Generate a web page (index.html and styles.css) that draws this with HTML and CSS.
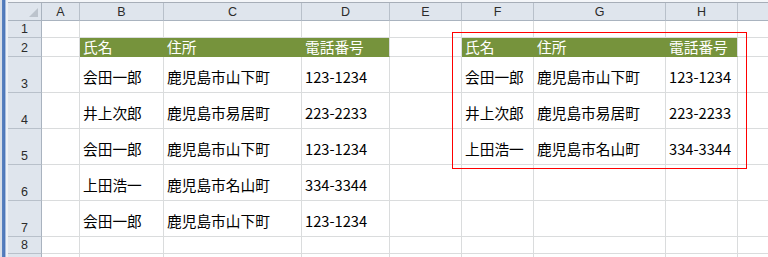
FILE: index.html
```html
<!DOCTYPE html>
<html lang="ja">
<head>
<meta charset="utf-8">
<title>Sheet</title>
<link rel="stylesheet" href="styles.css">
</head>
<body>
<div class="app">
  <div class="strip"></div>
  <div class="work">
    <div class="topbar"></div>
    <div class="sheet">
      <div class="corner"><span class="tri"></span></div>
      <div class="ch">A</div><div class="ch">B</div><div class="ch">C</div><div class="ch">D</div><div class="ch">E</div><div class="ch">F</div><div class="ch">G</div><div class="ch">H</div><div class="ch"></div>

      <div class="rh">1</div>
      <div class="c"></div><div class="c"></div><div class="c"></div><div class="c"></div><div class="c"></div><div class="c"></div><div class="c"></div><div class="c"></div><div class="c"></div>

      <div class="rh">2</div>
      <div class="c"></div>
      <div class="c hd join">氏名</div><div class="c hd join">住所</div><div class="c hd">電話番号</div>
      <div class="c"></div>
      <div class="c hd join">氏名</div><div class="c hd join">住所</div><div class="c hd">電話番号</div>
      <div class="c"></div>

      <div class="rh">3</div>
      <div class="c"></div><div class="c t">会田一郎</div><div class="c t">鹿児島市山下町</div><div class="c t">123-1234</div>
      <div class="c"></div><div class="c t">会田一郎</div><div class="c t">鹿児島市山下町</div><div class="c t">123-1234</div><div class="c"></div>

      <div class="rh">4</div>
      <div class="c"></div><div class="c t">井上次郎</div><div class="c t">鹿児島市易居町</div><div class="c t">223-2233</div>
      <div class="c"></div><div class="c t">井上次郎</div><div class="c t">鹿児島市易居町</div><div class="c t">223-2233</div><div class="c"></div>

      <div class="rh">5</div>
      <div class="c"></div><div class="c t">会田一郎</div><div class="c t">鹿児島市山下町</div><div class="c t">123-1234</div>
      <div class="c"></div><div class="c t">上田浩一</div><div class="c t">鹿児島市名山町</div><div class="c t">334-3344</div><div class="c"></div>

      <div class="rh">6</div>
      <div class="c"></div><div class="c t">上田浩一</div><div class="c t">鹿児島市名山町</div><div class="c t">334-3344</div>
      <div class="c"></div><div class="c"></div><div class="c"></div><div class="c"></div><div class="c"></div>

      <div class="rh">7</div>
      <div class="c"></div><div class="c t">会田一郎</div><div class="c t">鹿児島市山下町</div><div class="c t">123-1234</div>
      <div class="c"></div><div class="c"></div><div class="c"></div><div class="c"></div><div class="c"></div>

      <div class="rh">8</div>
      <div class="c"></div><div class="c"></div><div class="c"></div><div class="c"></div><div class="c"></div><div class="c"></div><div class="c"></div><div class="c"></div><div class="c"></div>

      <div class="rh"></div>
      <div class="c"></div><div class="c"></div><div class="c"></div><div class="c"></div><div class="c"></div><div class="c"></div><div class="c"></div><div class="c"></div><div class="c"></div>
    </div>
  </div>
  <div class="selbox"></div>
</div>
</body>
</html>
```

FILE: styles.css
```css
html, body {
  margin: 0;
  padding: 0;
  background: #ffffff;
  overflow: hidden;
}

.app {
  position: relative;
  display: flex;
  width: 768px;
  height: 257px;
  overflow: hidden;
}

.strip {
  flex: 0 0 8px;
  background: linear-gradient(to right, #d9dfe8 0, #d9dfe8 2px, #5a82c0 2px, #4c76b8 5px, #a9bedf 5px, #a9bedf 6px, #eef1f5 6px, #eef1f5 8px);
}

.work {
  flex: 1 1 auto;
  display: flex;
  flex-direction: column;
  overflow: hidden;
}

.topbar {
  flex: 0 0 3px;
  box-sizing: border-box;
  background: #f4f6f9;
  border-bottom: 1px solid #a7aeb8;
}

.sheet {
  display: grid;
  grid-template-columns: 34px 38px 84px 138px 88px 72px 72px 132px 72px 72px;
  grid-template-rows: 18px 17px 19px 36px 36px 36px 36px 36px 17px 17px;
  font-family: "Noto Sans CJK JP", "Noto Sans", sans-serif;
  font-size: 14.7px;
  color: #000000;
}

.corner,
.ch,
.rh {
  box-sizing: border-box;
  background: #dfe5ed;
  font-family: "Liberation Sans", Arial, sans-serif;
  font-size: 12.5px;
  color: #2b2b2b;
}

.corner {
  position: relative;
  border-right: 1px solid #a9b3bf;
  border-bottom: 1px solid #a9b3bf;
}

.corner .tri {
  position: absolute;
  right: 3px;
  bottom: 3px;
  width: 0;
  height: 0;
  border-left: 9px solid transparent;
  border-bottom: 9px solid #bcc3cc;
}

.ch {
  display: flex;
  align-items: center;
  justify-content: center;
  padding-top: 1px;
  border-right: 1px solid #b8c0ca;
  border-bottom: 1px solid #a9b3bf;
}

.rh {
  display: flex;
  align-items: flex-end;
  justify-content: center;
  padding-bottom: 1px;
  line-height: 14px;
  border-right: 1px solid #a9b3bf;
  border-bottom: 1px solid #b8c0ca;
}

.c {
  box-sizing: border-box;
  border-right: 1px solid #dadcdd;
  border-bottom: 1px solid #dadcdd;
  white-space: nowrap;
  overflow: hidden;
}

.t {
  display: flex;
  align-items: center;
  padding: 4px 0 0 3px;
}

.hd {
  display: flex;
  align-items: flex-end;
  padding: 0 0 0 3px;
  line-height: 18px;
  overflow: visible;
  background: #76933c;
  color: #ffffff;
  border-bottom-color: #76933c;
}

.hd.join {
  border-right-color: #76933c;
}

.selbox {
  position: absolute;
  left: 452px;
  top: 32px;
  width: 295px;
  height: 137px;
  box-sizing: border-box;
  border: 1px solid #ff0000;
  pointer-events: none;
}
```
